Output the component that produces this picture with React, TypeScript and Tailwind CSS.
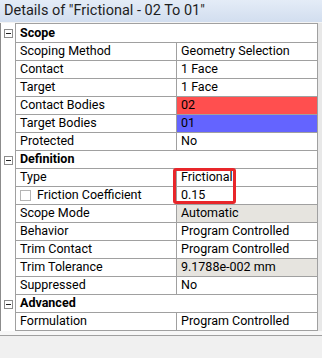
import React from 'react'

type Row =
  | { kind: 'cat'; label: string; top?: boolean }
  | { kind: 'prop'; label: string; value: string; bg?: string; check?: boolean }

const rows: Row[] = [
  { kind: 'cat', label: 'Scope', top: true },
  { kind: 'prop', label: 'Scoping Method', value: 'Geometry Selection' },
  { kind: 'prop', label: 'Contact', value: '1 Face' },
  { kind: 'prop', label: 'Target', value: '1 Face' },
  { kind: 'prop', label: 'Contact Bodies', value: '02', bg: 'bg-[#ff4f4f]' },
  { kind: 'prop', label: 'Target Bodies', value: '01', bg: 'bg-[#6464ff]' },
  { kind: 'prop', label: 'Protected', value: 'No' },
  { kind: 'cat', label: 'Definition' },
  { kind: 'prop', label: 'Type', value: 'Frictional' },
  { kind: 'prop', label: 'Friction Coefficient', value: '0.15', check: true },
  { kind: 'prop', label: 'Scope Mode', value: 'Automatic', bg: 'bg-[#e6e4df]' },
  { kind: 'prop', label: 'Behavior', value: 'Program Controlled' },
  { kind: 'prop', label: 'Trim Contact', value: 'Program Controlled' },
  { kind: 'prop', label: 'Trim Tolerance', value: '9.1788e-002 mm', bg: 'bg-[#e6e4df]' },
  { kind: 'prop', label: 'Suppressed', value: 'No' },
  { kind: 'cat', label: 'Advanced' },
  { kind: 'prop', label: 'Formulation', value: 'Program Controlled' },
]

function Minus() {
  return (
    <div className="flex h-[9px] w-[9px] items-center justify-center border border-[#8c8c8c] bg-white">
      <div className="h-px w-[5px] bg-[#202020]" />
    </div>
  )
}

export default function App() {
  return (
    <div
      className="relative flex h-[358px] w-[322px] flex-col overflow-hidden bg-white text-[12.5px] text-black"
      style={{ fontFamily: 'Roboto, "Liberation Sans", sans-serif' }}
    >
      <div className="flex h-[22px] items-center bg-gradient-to-b from-[#e4ecf7] to-[#d2deef] pl-[4px] text-[14.5px] text-[#1e1e1e]">
        Details of "Frictional - 02 To 01"
      </div>
      <div className="h-px bg-[#f4f4f4]" />
      <div className="flex">
        <div className="w-[318px] border-l border-[#8c8c8c] border-r border-r-[#a0a0a0]">
          {rows.map((r, i) =>
            r.kind === 'cat' ? (
              <div key={i} className={`flex ${r.top ? 'h-[20px]' : 'h-[18px]'}`}>
                <div className="flex w-[14px] shrink-0 items-center justify-center">
                  <Minus />
                </div>
                <div
                  className={`flex flex-1 items-center border-b border-l border-[#a0a0a0] pl-[4px] font-bold ${
                    r.top ? 'border-t' : ''
                  }`}
                >
                  {r.label}
                </div>
              </div>
            ) : (
              <div key={i} className="flex h-[18px]">
                <div className="w-[14px] shrink-0" />
                <div className="flex w-[161px] shrink-0 items-center border-b border-l border-[#a0a0a0] pl-[4px]">
                  {r.check && (
                    <div className="mr-[6px] h-[11px] w-[11px] border border-[#b4b4b4] bg-white" />
                  )}
                  {r.label}
                </div>
                <div
                  className={`flex flex-1 items-center border-b border-l border-[#a0a0a0] pl-[4px] ${r.bg ?? ''}`}
                >
                  {r.value}
                </div>
              </div>
            )
          )}
        </div>
        <div className="flex-1 bg-[#e8e8e8]" />
      </div>
      <div className="h-[4px] bg-[#f7f7f7]" />
      <div className="flex-1 border-t border-[#a0a0a0] bg-[#f0f0f0]" />
      <div className="pointer-events-none absolute left-[173px] top-[168px] h-[36px] w-[63px] rounded-[3px] border-[3px] border-[#e8262a]" />
    </div>
  )
}
